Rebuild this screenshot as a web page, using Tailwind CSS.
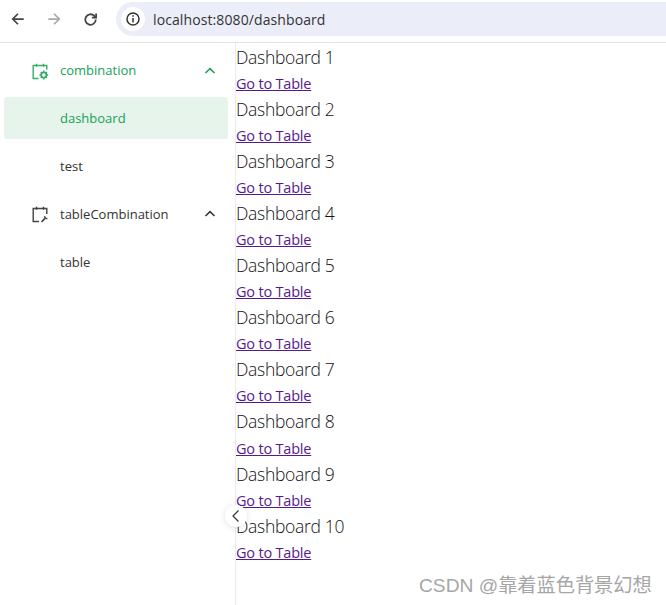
<!DOCTYPE html>
<html lang="en">
<head>
<meta charset="UTF-8">
<title>dashboard</title>
<script src="https://cdn.jsdelivr.net/npm/@tailwindcss/browser@4"></script>
</head>
<body class="bg-white h-[605px] w-[666px] overflow-hidden relative font-['Open_Sans','Noto_Sans_CJK_SC',sans-serif]">
  <!-- browser bar -->
  <nav class="h-[43px] border-b border-[#e3e3e3] flex items-center pb-[4px]">
    <div class="w-[36px] flex justify-center">
      <svg width="14" height="14" viewBox="0 0 16 16" fill="none" stroke="#444" stroke-width="2"><path d="M14.500 8H2M8 2 2 8l6 6"/></svg>
    </div>
    <div class="w-[36px] flex justify-center">
      <svg width="14" height="14" viewBox="0 0 16 16" fill="none" stroke="#aaa" stroke-width="2"><path d="M1.500 8H14M8 2l6 6-6 6"/></svg>
    </div>
    <div class="w-[36px] flex justify-center">
      <svg width="15" height="15" viewBox="0 0 16 16" fill="none" stroke="#444" stroke-width="1.900"><path d="M13.600 8a5.600 5.600 0 1 1-1.700-4L14 6"/><path d="M14 1.500V6H9.500" /></svg>
    </div>
    <div class="ml-[8px] h-[34px] flex-1 bg-[#ebeef8] rounded-l-full flex items-center pl-[5px]">
      <div class="w-[24px] h-[24px] bg-white rounded-full flex items-center justify-center">
        <svg width="14" height="14" viewBox="0 0 14 14" fill="none" stroke="#333" stroke-width="1.500"><circle cx="7" cy="7" r="6"/><path d="M7 6v4.400M7 3.200v1.600"/></svg>
      </div>
      <span class="ml-[8px] text-[14px] text-[#333] tracking-[0.1px]">localhost:8080/dashboard</span>
    </div>
  </nav>

  <div class="flex h-[562px]">
    <!-- sidebar -->
    <aside class="w-[236px] shrink-0 border-r border-[#eaeaea] pt-[4px] text-[13px]">
      <div class="h-[48px] mb-[2px] flex items-center pl-[32px] pr-[19px] text-[#18a058]">
        <svg width="17" height="17" viewBox="0 0 17 17" fill="none" stroke="#36ad6a" stroke-width="1.400">
          <path d="M6.500 15.500H1.200V2.500h13.600V6.500"/><path d="M4.500 .8v3M11.500 .8v3"/>
          <circle cx="11.800" cy="12" r="2.600" stroke-width="1.700"/>
          <path d="M11.800 7.600v1.500M11.800 14.900v1.500M7.400 12h1.500M14.700 12h1.500M8.700 8.900l1 1M13.900 14.100l1 1M14.900 8.900l-1 1M9.700 14.100l-1 1"/>
        </svg>
        <span class="ml-[11px] flex-1">combination</span>
        <svg width="12" height="12" viewBox="0 0 12 12" fill="none" stroke="#18a058" stroke-width="1.500"><path d="M1.500 8 6 3.600 10.500 8"/></svg>
      </div>
      <div class="h-[42px] mx-[4px] w-[224px] rounded-[3px] bg-[#e7f4ec] flex items-center pl-[56px] pt-[2px] text-[#18a058]">dashboard</div>
      <div class="h-[54px] flex items-center pl-[60px] pt-[2px] text-[#333]">test</div>
      <div class="h-[42px] flex items-center pl-[32px] pr-[19px] text-[#333]">
        <svg width="17" height="17" viewBox="0 0 17 17" fill="none" stroke="#444" stroke-width="1.400">
          <path d="M7 15.500H1.200V2.500h13.600V8"/><path d="M4.500 .8v3M11.500 .8v3"/>
          <path d="M9.500 16 13 12.300" stroke-width="1.700"/><path d="M12.800 10a2 2 0 0 0 2.600 2.400"/>
        </svg>
        <span class="ml-[11px] flex-1 pt-[2px]">tableCombination</span>
        <svg width="12" height="12" viewBox="0 0 12 12" fill="none" stroke="#333" stroke-width="1.500"><path d="M1.500 8 6 3.600 10.500 8"/></svg>
      </div>
      <div class="h-[54px] flex items-center pl-[60px] pt-[2px] text-[#333]">table</div>
    </aside>

    <!-- dashboards -->
    <main class="flex-1 pt-[1px] text-[#111]">
      <div class="h-[52.065px]"><div class="h-[27.05px] leading-[27px] text-[17.500px] font-light tracking-[-0.3px]">Dashboard 1</div><a href="#" class="block w-fit h-[25px] leading-[25px] text-[14.500px] text-[#551a8b] underline tracking-[-0.2px]">Go to Table</a></div>
      <div class="h-[52.065px]"><div class="h-[27.05px] leading-[27px] text-[17.500px] font-light tracking-[-0.3px]">Dashboard 2</div><a href="#" class="block w-fit h-[25px] leading-[25px] text-[14.500px] text-[#551a8b] underline tracking-[-0.2px]">Go to Table</a></div>
      <div class="h-[52.065px]"><div class="h-[27.05px] leading-[27px] text-[17.500px] font-light tracking-[-0.3px]">Dashboard 3</div><a href="#" class="block w-fit h-[25px] leading-[25px] text-[14.500px] text-[#551a8b] underline tracking-[-0.2px]">Go to Table</a></div>
      <div class="h-[52.065px]"><div class="h-[27.05px] leading-[27px] text-[17.500px] font-light tracking-[-0.3px]">Dashboard 4</div><a href="#" class="block w-fit h-[25px] leading-[25px] text-[14.500px] text-[#551a8b] underline tracking-[-0.2px]">Go to Table</a></div>
      <div class="h-[52.065px]"><div class="h-[27.05px] leading-[27px] text-[17.500px] font-light tracking-[-0.3px]">Dashboard 5</div><a href="#" class="block w-fit h-[25px] leading-[25px] text-[14.500px] text-[#551a8b] underline tracking-[-0.2px]">Go to Table</a></div>
      <div class="h-[52.065px]"><div class="h-[27.05px] leading-[27px] text-[17.500px] font-light tracking-[-0.3px]">Dashboard 6</div><a href="#" class="block w-fit h-[25px] leading-[25px] text-[14.500px] text-[#551a8b] underline tracking-[-0.2px]">Go to Table</a></div>
      <div class="h-[52.065px]"><div class="h-[27.05px] leading-[27px] text-[17.500px] font-light tracking-[-0.3px]">Dashboard 7</div><a href="#" class="block w-fit h-[25px] leading-[25px] text-[14.500px] text-[#551a8b] underline tracking-[-0.2px]">Go to Table</a></div>
      <div class="h-[52.065px]"><div class="h-[27.05px] leading-[27px] text-[17.500px] font-light tracking-[-0.3px]">Dashboard 8</div><a href="#" class="block w-fit h-[25px] leading-[25px] text-[14.500px] text-[#551a8b] underline tracking-[-0.2px] relative top-[1px]">Go to Table</a></div>
      <div class="h-[52.065px]"><div class="h-[27.05px] leading-[27px] text-[17.500px] font-light tracking-[-0.3px]">Dashboard 9</div><a href="#" class="block w-fit h-[25px] leading-[25px] text-[14.500px] text-[#551a8b] underline tracking-[-0.2px]">Go to Table</a></div>
      <div class="h-[52.065px]"><div class="h-[27.05px] leading-[27px] text-[17.500px] font-light tracking-[-0.3px]">Dashboard 10</div><a href="#" class="block w-fit h-[25px] leading-[25px] text-[14.500px] text-[#551a8b] underline tracking-[-0.2px]">Go to Table</a></div>
    </main>
  </div>

  <!-- sidebar collapse button -->
  <div class="absolute left-[225px] top-[505px] w-[22px] h-[22px] rounded-full bg-white shadow-[0_1px_6px_rgba(0,0,0,0.12)] flex items-center justify-center">
    <svg width="10" height="14" viewBox="0 0 10 14" fill="none" stroke="#333" stroke-width="1.200"><path d="M7.500 1.500 2 7l5.500 5.500"/></svg>
  </div>

  <!-- watermark -->
  <div class="absolute left-[419px] top-[574px] text-[19.200px] leading-[24px] text-[#a6a6a6] whitespace-nowrap font-['Liberation_Sans','Noto_Sans_CJK_SC',sans-serif]">CSDN @靠着蓝色背景幻想</div>
</body>
</html>
